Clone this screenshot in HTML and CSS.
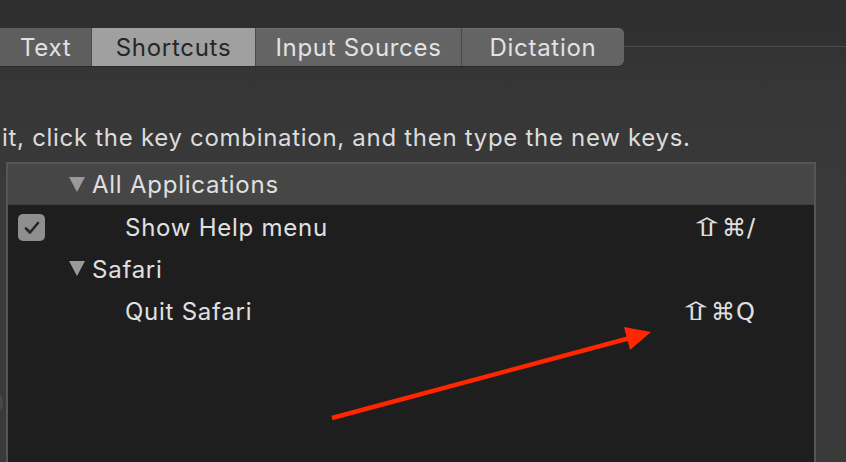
FILE: index.html
```html
<!DOCTYPE html>
<html>
<head>
<meta charset="utf-8">
<link rel="stylesheet" href="styles.css">
</head>
<body>
<div class="window">
  <div class="tabbar">
    <div class="tabs">
      <div class="tab tab-text">Text</div>
      <div class="tab tab-shortcuts selected">Shortcuts</div>
      <div class="tab tab-input">Input Sources</div>
      <div class="tab tab-dictation">Dictation</div>
    </div>
    <div class="tabline"></div>
  </div>
  <p class="hint">it, click the key combination, and then type the new keys.</p>
  <div class="table">
    <div class="row header">
      <span class="tri"></span><span class="label">All Applications</span>
    </div>
    <div class="row item">
      <span class="check"><svg width="16" height="14" viewBox="0 0 16 14"><path d="M2 7.5 L6 11.5 L14 2" fill="none" stroke="#262626" stroke-width="2.6" stroke-linecap="round" stroke-linejoin="round"/></svg></span>
      <span class="label item-label">Show Help menu</span>
      <span class="keys"><span class="shift">⇧</span>⌘/</span>
    </div>
    <div class="row group">
      <span class="tri"></span><span class="label">Safari</span>
    </div>
    <div class="row item">
      <span class="label item-label">Quit Safari</span>
      <span class="keys"><span class="shift">⇧</span>⌘Q</span>
    </div>
    <div class="rest"></div>
  </div>
</div>
<svg class="arrow" width="846" height="462" viewBox="0 0 846 462">
  <line x1="332" y1="418" x2="630" y2="338" stroke="#ff2600" stroke-width="4.5"/>
  <polygon points="651,332 624,327 630,350" fill="#ff2600"/>
</svg>
<div class="knob"></div>
</body>
</html>
```
FILE: styles.css
```css
html, body {
  margin: 0;
  padding: 0;
}
body {
  width: 846px;
  height: 462px;
  overflow: hidden;
  background: linear-gradient(#2f2f2f 0, #2f2f2f 28px, #353535 66px, #3a3a3a 200px);
  font-family: Inter, "Helvetica Neue", "Liberation Sans", sans-serif;
  color: #dcdcdc;
  position: relative;
}
.window {
  padding-top: 28px;
}
.tabbar {
  display: flex;
  align-items: flex-start;
}
.tabs {
  display: flex;
  height: 38px;
  background: #646464;
  border-radius: 0 6px 6px 0;
  box-shadow: inset 0 1px 0 #6e6e6e, 0 1px 0 #2a2a2a;
}
.tab {
  height: 38px;
  display: flex;
  align-items: center;
  justify-content: center;
  font-size: 24px;
  letter-spacing: 0.7px;
  color: #e2e2e2;
  border-right: 1px solid #4a4a4a;
  box-sizing: border-box;
}
.tab-text { width: 92px; background: #5e5e5e; justify-content: flex-start; padding-left: 20px; }
.tab-shortcuts { width: 164px; }
.tab-input { width: 206px; }
.tab-dictation { width: 162px; border-right: none; border-radius: 0 6px 6px 0; }
.selected {
  background: #a0a0a0;
  color: #262626;
}
.tabline {
  flex: 1;
  height: 1px;
  margin-top: 18px;
  background: #4c4c4c;
}
.hint {
  margin: 0;
  padding: 57px 0 0 2px;
  height: 30px;
  line-height: 30px;
  font-size: 24px;
  color: #dcdcdc;
  letter-spacing: 0.7px;
}
.table {
  margin: 9px 0 0 6px;
  width: 806px;
  border: 2px solid #555;
  border-bottom: none;
  background: #1e1e1e;
  height: 320px;
}
.row {
  display: flex;
  align-items: center;
  height: 42px;
  position: relative;
  font-size: 24px;
  letter-spacing: 0.75px;
  color: #e0e0e0;
}
.row.item .label,
.row.group .label {
  padding-top: 2px;
}
.header {
  height: 40px;
  background: #464646;
  border-bottom: 1px solid #3e3e3e;
}
.header .label {
  padding-top: 1px;
}
.tri {
  width: 0;
  height: 0;
  margin-left: 61px;
  margin-right: 7px;
  border-left: 8.5px solid transparent;
  border-right: 8.5px solid transparent;
  border-top: 15px solid #9a9a9a;
}
.check {
  position: absolute;
  left: 10px;
  top: 9px;
  width: 27px;
  height: 27px;
  border-radius: 5px;
  background: #8f8f8f;
  display: flex;
  align-items: center;
  justify-content: center;
}
.item-label {
  margin-left: 117px;
}
.keys {
  margin-left: auto;
  margin-right: 58px;
  padding-top: 3px;
  font-family: "DejaVu Sans", sans-serif;
  font-size: 24px;
  letter-spacing: 1px;
  display: flex;
  align-items: center;
}
.shift {
  display: inline-block;
  font-size: 25px;
  font-weight: 200;
  line-height: 1;
  letter-spacing: 0;
  transform: scaleX(1.8);
  margin: 0 5px 0 3px;
}
.arrow {
  position: absolute;
  left: 0;
  top: 0;
  pointer-events: none;
}
.knob {
  position: absolute;
  left: -8px;
  top: 394px;
  width: 11px;
  height: 18px;
  border-radius: 50%;
  background: #4a4a4a;
}
```
